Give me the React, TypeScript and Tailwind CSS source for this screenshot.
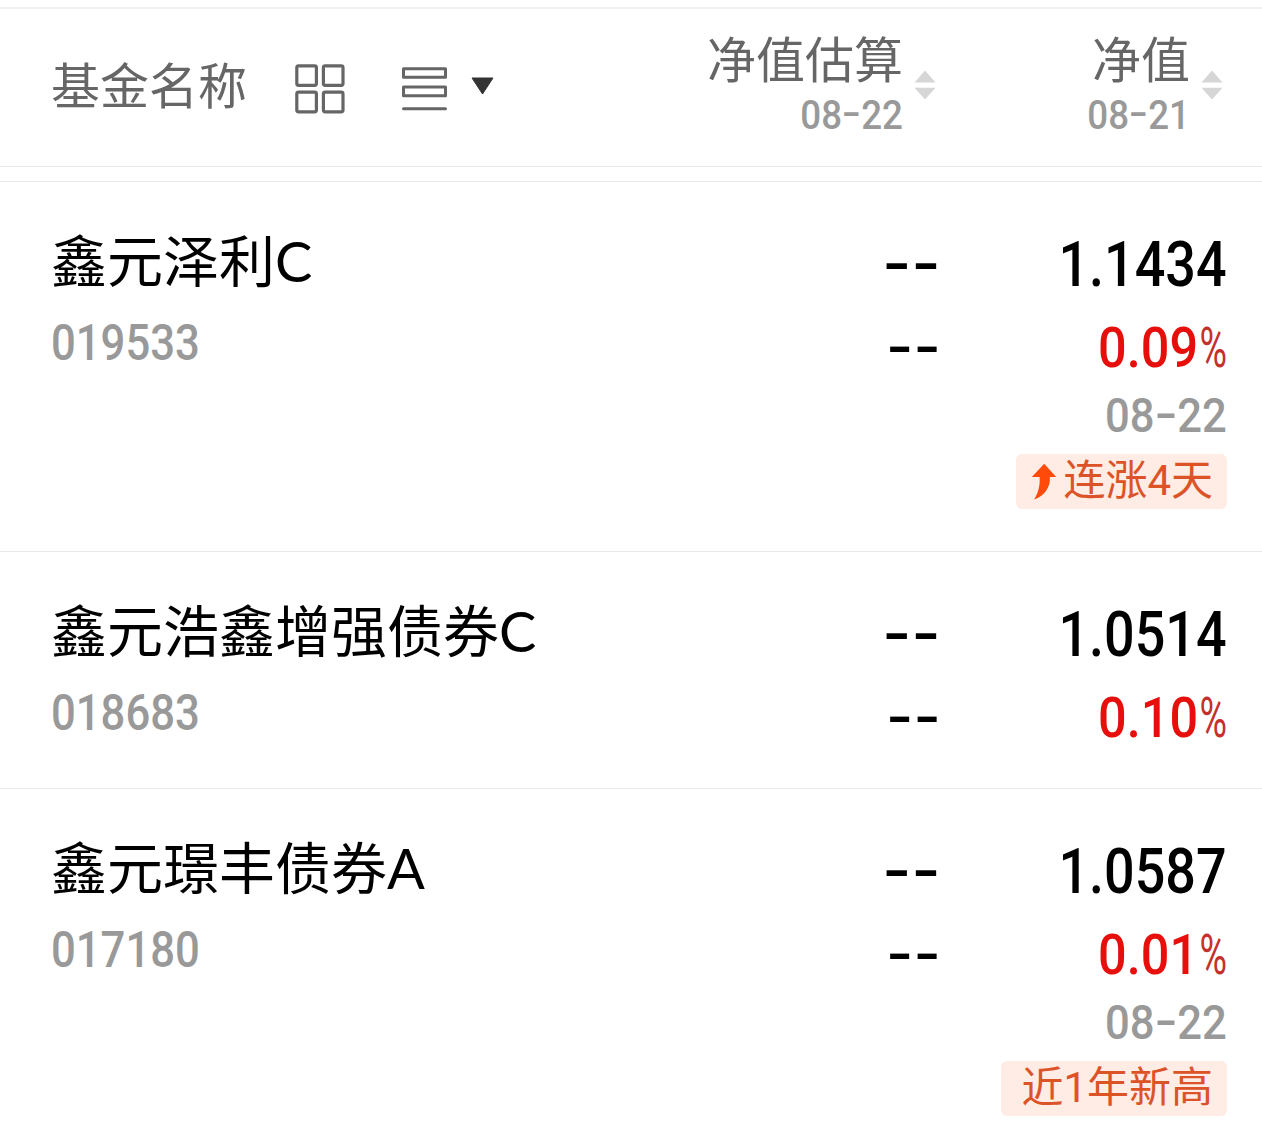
type Fund = {
  name: string;
  code: string;
  value: string;
  change: string;
  date?: string;
  tag?: string;
  rising?: boolean;
};

const FUNDS: Fund[] = [
  {
    name: "鑫元泽利C",
    code: "019533",
    value: "1.1434",
    change: "0.09",
    date: "08-22",
    tag: "连涨4天",
    rising: true,
  },
  {
    name: "鑫元浩鑫增强债券C",
    code: "018683",
    value: "1.0514",
    change: "0.10",
  },
  {
    name: "鑫元璟丰债券A",
    code: "017180",
    value: "1.0587",
    change: "0.01",
    date: "08-22",
    tag: "近1年新高",
  },
];

function GridIcon() {
  return (
    <svg
      className="h-[50px] w-[50px]"
      viewBox="0 0 50 50"
      fill="none"
      stroke="#666"
      strokeWidth="3.2"
    >
      <rect x="1.8" y="1.8" width="19.6" height="19.6" rx="1.8" />
      <rect x="28.4" y="1.8" width="19.6" height="19.6" rx="1.8" />
      <rect x="1.8" y="28.2" width="19.6" height="19.6" rx="1.8" />
      <rect x="28.4" y="28.2" width="19.6" height="19.6" rx="1.8" />
    </svg>
  );
}

function ListIcon() {
  return (
    <svg
      className="h-[44px] w-[45px]"
      viewBox="0 0 45 44"
      fill="none"
      stroke="#666"
      strokeWidth="3"
      strokeLinejoin="round"
      strokeLinecap="round"
    >
      <rect x="1.5" y="1.7" width="42" height="8.6" />
      <rect x="1.5" y="20" width="42" height="8.8" />
      <path d="M1.5 41.7h42" />
    </svg>
  );
}

function SortIcon() {
  return (
    <svg className="h-[30px] w-[22px]" viewBox="0 0 22 30" fill="#d6d6d6">
      <path d="M11 .5 21.5 12.5H.5z" />
      <path d="M.5 17.8h21L11 29.5z" />
    </svg>
  );
}

function RiseIcon() {
  return (
    <svg className="h-[37px] w-[26px]" viewBox="0 0 26 37" fill="#ff4a0a">
      <path d="M13.2 .8 25.2 14H18.8C19.8 24 13.5 33 3 36.6 7.5 29.5 9.2 22 8.6 14H.8z" />
    </svg>
  );
}

function DateText({ text, large }: { text: string; large?: boolean }) {
  const [month, day] = text.split("-");
  return (
    <span
      className={
        large
          ? "inline-flex origin-right scale-x-[0.89] text-[49px] font-medium"
          : "inline-flex origin-right scale-x-[0.885] text-[41.5px] font-medium"
      }
    >
      {month}
      <span className="-mt-[2px] w-[0.52em] scale-x-[1.5] text-center">-</span>
      {day}
    </span>
  );
}

function ColumnHead({ title, date }: { title: string; date: string }) {
  return (
    <>
      <div className="flex flex-col items-end">
        <span className="mt-[3px] text-[49px] leading-[66px]">{title}</span>
        <span className="flex h-[40px] items-center leading-[40px] text-[#999]">
          <DateText text={date} />
        </span>
      </div>
      <div className="ml-[11px] mt-[44px]">
        <SortIcon />
      </div>
    </>
  );
}

function FundRow({ fund }: { fund: Fund }) {
  return (
    <div className="flex border-b border-[#eaeaea] pb-[29px] pl-[51px] pr-[35px] pt-[41px]">
      <div className="min-w-0 flex-1">
        <div className="whitespace-nowrap font-[Lato,'Noto_Sans_CJK_SC',sans-serif] text-[56px] leading-[75px] text-black">
          {fund.name}
        </div>
        <div className="mt-[5px] origin-left scale-x-[0.873] text-[50px] font-medium leading-[80px] text-[#999]">
          {fund.code}
        </div>
      </div>

      <div className="-mr-[3px] flex shrink-0 flex-col items-end font-medium text-black">
        <span className="origin-right scale-x-[1.27] text-[62px] leading-[82px] tracking-[2px]">
          --
        </span>
        <span className="origin-right scale-x-[1.27] text-[58px] leading-[84px] tracking-[2px]">
          --
        </span>
      </div>

      <div className="flex w-[288px] shrink-0 flex-col items-end">
        <span className="origin-right scale-x-[0.855] text-[63px] font-medium leading-[84px] text-black">
          {fund.value}
        </span>
        <div className="flex h-[82px] text-[56px] leading-[82px]">
          <span className="origin-right scale-x-[0.9] font-medium text-[#e60f0c]">
            {fund.change}
          </span>
          <span className="flex w-[29px] justify-end">
            <span className="origin-right scale-x-[0.67] text-[#c4302c]">
              %
            </span>
          </span>
        </div>
        {fund.date && (
          <span className="flex h-[54px] items-center leading-[54px] text-[#999]">
            <DateText text={fund.date} large />
          </span>
        )}
        {fund.tag && (
          <div
            className={`mb-[13px] mt-[11px] flex h-[55px] items-center rounded-md bg-[#ffece5] pr-[14px] text-[42px] leading-[50px] text-[#dd5328] ${
              fund.rising ? "gap-[6px] pl-[15px]" : "pl-[20px]"
            }`}
          >
            {fund.rising && <RiseIcon />}
            <span className="-mt-[2px]">{fund.tag}</span>
          </div>
        )}
      </div>
    </div>
  );
}

export default function App() {
  return (
    <div className="h-[1127px] w-[1262px] overflow-hidden bg-white pt-[7px] font-[Roboto,'Noto_Sans_CJK_SC',sans-serif]">
      <header className="flex h-[160px] border-b border-t-2 border-b-[#eaeaea] border-t-[#f2f2f2] pl-[51px] pr-[39px] text-[#666]">
        <div className="flex flex-1 items-start">
          <span className="mt-[43px] text-[49px] leading-[72px]">
            基金名称
          </span>
          <div className="ml-[48px] mt-[55px]">
            <GridIcon />
          </div>
          <div className="ml-[57px] mt-[58px]">
            <ListIcon />
          </div>
          <svg
            className="ml-[24px] mt-[68px] h-[18px] w-[23px]"
            viewBox="0 0 23 18"
            fill="#333"
            stroke="#333"
            strokeLinejoin="round"
          >
            <path d="M1 1h21L11.5 17z" />
          </svg>
        </div>
        <div className="flex pt-[17px]">
          <div className="flex">
            <ColumnHead title="净值估算" date="08-22" />
          </div>
          <div className="flex w-[287px] justify-end">
            <ColumnHead title="净值" date="08-21" />
          </div>
        </div>
      </header>
      <main className="mt-[14px] border-t border-[#eaeaea]">
        {FUNDS.map((fund) => (
          <FundRow key={fund.code} fund={fund} />
        ))}
      </main>
    </div>
  );
}
